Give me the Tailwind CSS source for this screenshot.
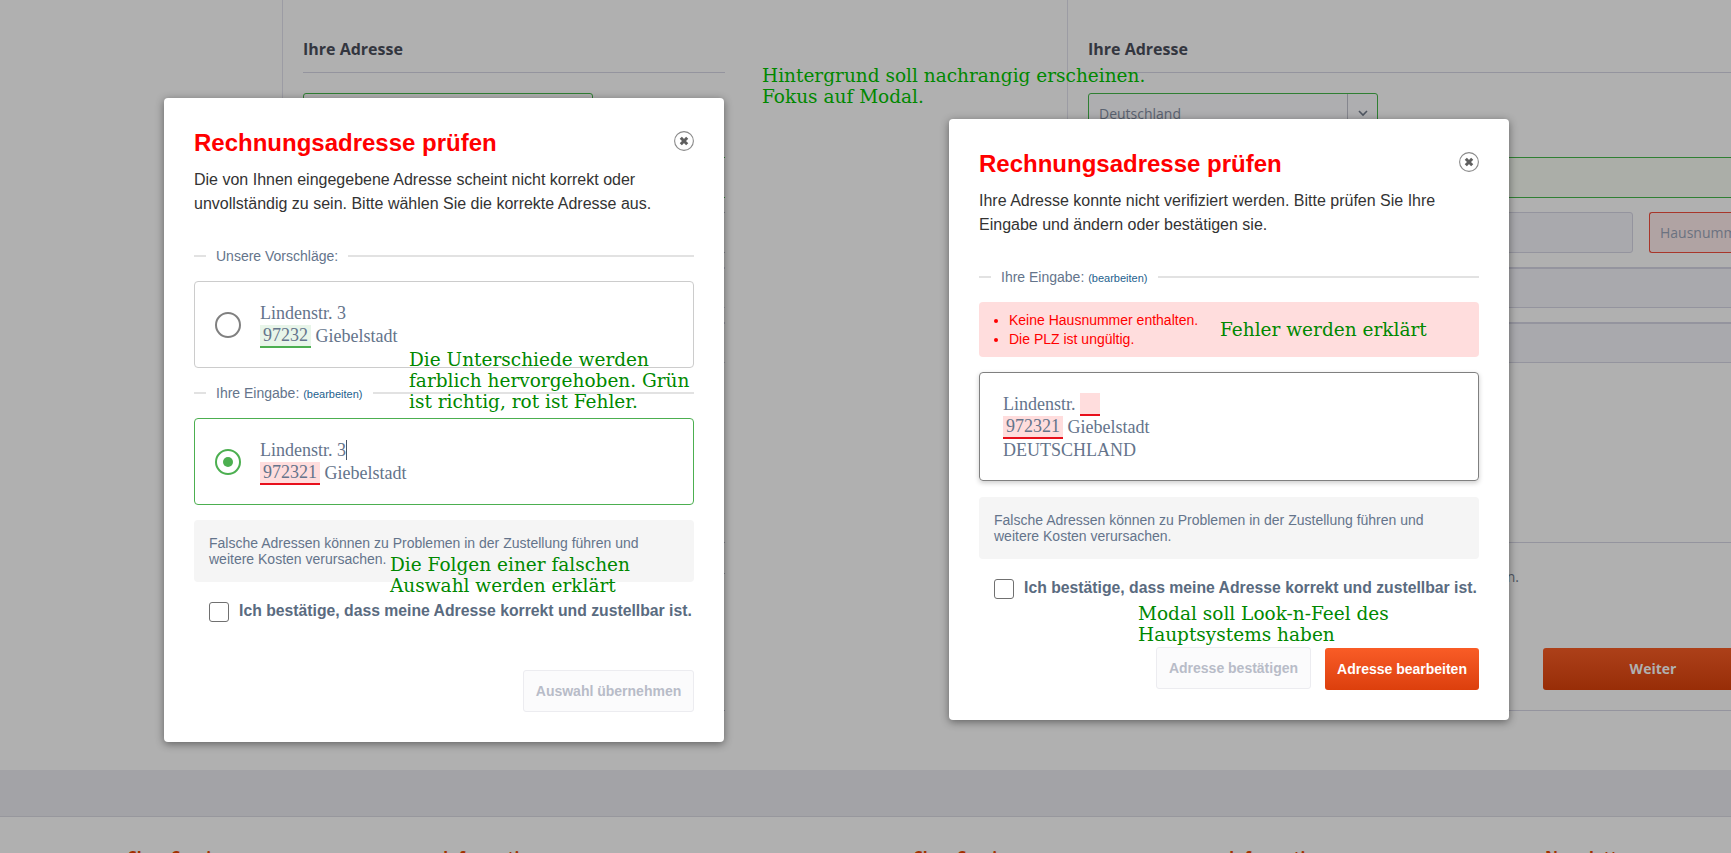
<!DOCTYPE html>
<html lang="de">
<head>
<meta charset="utf-8">
<title>Rechnungsadresse prüfen</title>
<script src="https://cdn.jsdelivr.net/npm/@tailwindcss/browser@4"></script>
</head>
<body class="m-0">
<div class="relative w-[1731px] h-[853px] overflow-hidden bg-[#b0b0b0] font-['Liberation_Sans',Arial,sans-serif]">

  <!-- dimmed page behind the modals -->
  <div class="flex h-[770px] overflow-hidden font-['Open_Sans',sans-serif]">
    <div class="flex w-[785px] shrink-0">
      <div class="w-[283px] h-[400px] shrink-0 border-r border-[#9c9ca4]"></div>
      <div class="ml-5 w-[422px] shrink-0">
        <div class="pt-[38px] pb-[12px] border-b border-[#94949e] text-[16px] leading-[22px] font-bold text-[#33363f]">Ihre Adresse</div>
        <div class="mt-5 w-[290px] h-10 border border-[#2f7f33] rounded-[3px]"></div>
        <div class="mt-6 h-[41px] border-y border-[#2f7f33]"></div>
        <div class="mt-[14px] h-[41px] border-y border-[#85868e]"></div>
        <div class="mt-[14px] h-[41px] border-t-2 border-b border-[#94949e]"></div>
        <div class="mt-[14px] h-[41px] border-t-2 border-b border-[#94949e]"></div>
        <div class="mt-[179px] border-t border-[#85868e]"></div>
        <div class="mt-[30px] border-t border-[#85868e]"></div>
        <div class="mt-[136px] border-t border-[#85868e]"></div>
      </div>
    </div>
    <div class="flex flex-1 min-w-0">
      <div class="w-[283px] h-[400px] shrink-0 border-r border-[#9c9ca4]"></div>
      <div class="ml-5 flex-1 min-w-0">
        <div class="pt-[38px] pb-[12px] border-b border-[#94949e] text-[16px] leading-[22px] font-bold text-[#33363f]">Ihre Adresse</div>
        <div class="mt-5 w-[290px] h-10 flex border border-[#2f7f33] rounded-[3px] bg-[#aeaeb0]">
          <div class="flex-1 pl-[10px] text-[14px] leading-[40px] text-[#5a6270]">Deutschland</div>
          <div class="w-[30px] flex items-center justify-center border-l border-[#85868e]">
            <svg width="10" height="7" viewBox="0 0 10 7" fill="none" stroke="#4f5661" stroke-width="1.6"><path d="M1 1l4 4 4-4"/></svg>
          </div>
        </div>
        <div class="mt-6 h-[41px] border-y border-[#2f7f33] bg-[#abaea8]"></div>
        <div class="mt-[14px] flex gap-[16px] h-[41px]">
          <div class="w-[545px] shrink-0 border border-[#94949e] rounded-[3px] bg-[#a9a9ad]"></div>
          <div class="flex-1 pl-[10px] border border-[#a8362a] rounded-l-[3px] border-r-0 bg-[#b0a3a3] text-[14px] leading-[39px] text-[#6b7280]">Hausnummer</div>
        </div>
        <div class="mt-[14px] h-[41px] border-t-2 border-b border-[#94949e] bg-[#a9a9ad]"></div>
        <div class="mt-[14px] h-[41px] border-t-2 border-b border-[#94949e] bg-[#a9a9ad]"></div>
        <div class="mt-[179px] border-t border-[#94949e]"></div>
        <p class="mt-[24px] w-[431px] text-right text-[14px] leading-[20px] text-[#4f5661]">Bitte prüfen Sie Ihre Angaben.</p>
        <div class="mt-[61px] ml-[455px] w-[220px] h-[42px] rounded-[3px] bg-gradient-to-b from-[#ad4019] to-[#982d07] text-center text-[14px] leading-[42px] font-bold text-[#b0b0b0]">Weiter</div>
        <div class="mt-[20px] border-t border-[#94949e]"></div>
      </div>
    </div>
  </div>

  <div class="h-[47px] bg-[#a3a3a7] border-b border-[#97979d]"></div>
  <div class="relative h-9 font-['Open_Sans',sans-serif] text-[16px] leading-[22px] font-bold text-[#a33000]">
    <span class="absolute left-[128px] top-[29px]">Shop Service</span>
    <span class="absolute left-[443px] top-[29px]">Informationen</span>
    <span class="absolute left-[914px] top-[29px]">Shop Service</span>
    <span class="absolute left-[1229px] top-[29px]">Informationen</span>
    <span class="absolute left-[1545px] top-[29px]">Newsletter</span>
  </div>

  <!-- left modal -->
  <section class="absolute left-[164px] top-[98px] w-[560px] px-[30px] pt-[30px] pb-[30px] bg-white rounded-[4px] shadow-[0_2px_8px_rgba(0,0,0,0.45)]">
    <div class="flex justify-between items-start">
      <h2 class="text-[24px] leading-[30px] font-bold text-[#ff0000]">Rechnungsadresse prüfen</h2>
      <svg class="mt-[3px]" width="20" height="20" viewBox="0 0 20 20" fill="none"><circle cx="10" cy="10" r="9.4" stroke="#8a8a8a" stroke-width="1.1"/><path d="M6.8 6.8l6.4 6.4M13.2 6.8l-6.4 6.4" stroke="#5f5f5f" stroke-width="3"/></svg>
    </div>
    <p class="mt-[10px] text-[16px] leading-[24px] text-[#333]">Die von Ihnen eingegebene Adresse scheint nicht korrekt oder<br>unvollständig zu sein. Bitte wählen Sie die korrekte Adresse aus.</p>

    <div class="mt-[30px] flex items-center h-5 text-[14px] text-[#64748b]">
      <span class="w-3 h-0.5 bg-[#e2e2e2]"></span>
      <span class="mx-[10px]">Unsere Vorschläge:</span>
      <span class="flex-1 h-0.5 bg-[#e2e2e2]"></span>
    </div>
    <div class="mt-[15px] h-[87px] flex items-center gap-[19px] pl-5 border border-[#cccccc] rounded-[4px]">
      <span class="w-[26px] h-[26px] rounded-full border-2 border-[#808080]"></span>
      <div class="font-['Liberation_Serif',serif] text-[18px] leading-[23px] text-[#64748b]">
        <div>Lindenstr. 3</div>
        <div><span class="inline-block align-top h-[23px] px-[3px] leading-[21px] bg-[#e8f5e9] border-b-2 border-[#4caf50]">97232</span> Giebelstadt</div>
      </div>
    </div>

    <div class="mt-[15px] flex items-center h-5 text-[14px] text-[#64748b]">
      <span class="w-3 h-0.5 bg-[#e2e2e2]"></span>
      <span class="mx-[10px]">Ihre Eingabe: <a class="text-[11px] text-[#1e5f8e]">(bearbeiten)</a></span>
      <span class="flex-1 h-0.5 bg-[#e2e2e2]"></span>
    </div>
    <div class="mt-[15px] h-[87px] flex items-center gap-[19px] pl-5 border border-[#4caf50] rounded-[4px]">
      <span class="w-[26px] h-[26px] rounded-full border-2 border-[#4caf50] flex items-center justify-center"><span class="w-[10px] h-[10px] rounded-full bg-[#4caf50]"></span></span>
      <div class="font-['Liberation_Serif',serif] text-[18px] leading-[23px] text-[#64748b]">
        <div>Lindenstr. 3<span class="inline-block align-top mt-px w-px h-5 bg-[#475569]"></span></div>
        <div><span class="inline-block align-top h-[23px] px-[3px] leading-[21px] bg-[#ffdddd] border-b-2 border-[#e8101c]">972321</span> Giebelstadt</div>
      </div>
    </div>

    <div class="mt-[15px] h-[62px] px-[15px] py-[15px] bg-[#f5f5f5] rounded-[4px] text-[14px] leading-4 text-[#64748b]">Falsche Adressen können zu Problemen in der Zustellung führen und<br>weitere Kosten verursachen.</div>

    <label class="mt-5 pl-[15px] flex items-start gap-[10px] h-5">
      <span class="w-5 h-5 shrink-0 rounded-[3px] border border-[#707070]"></span>
      <span class="-mt-px text-[15.75px] leading-5 font-bold text-[#5a6b80] whitespace-nowrap">Ich bestätige, dass meine Adresse korrekt und zustellbar ist.</span>
    </label>

    <div class="mt-12 flex justify-end">
      <button class="h-[42px] w-[171px] rounded-[3px] border border-[#ececf0] bg-[#fbfbfc] text-[14px] font-bold text-[#b8bcc8]">Auswahl übernehmen</button>
    </div>
  </section>

  <!-- right modal -->
  <section class="absolute left-[949px] top-[119px] w-[560px] px-[30px] pt-[30px] pb-[30px] bg-white rounded-[4px] shadow-[0_2px_8px_rgba(0,0,0,0.45)]">
    <div class="flex justify-between items-start">
      <h2 class="text-[24px] leading-[30px] font-bold text-[#ff0000]">Rechnungsadresse prüfen</h2>
      <svg class="mt-[3px]" width="20" height="20" viewBox="0 0 20 20" fill="none"><circle cx="10" cy="10" r="9.4" stroke="#8a8a8a" stroke-width="1.1"/><path d="M6.8 6.8l6.4 6.4M13.2 6.8l-6.4 6.4" stroke="#5f5f5f" stroke-width="3"/></svg>
    </div>
    <p class="mt-[10px] text-[16px] leading-[24px] text-[#333]">Ihre Adresse konnte nicht verifiziert werden. Bitte prüfen Sie Ihre<br>Eingabe und ändern oder bestätigen sie.</p>

    <div class="mt-[30px] flex items-center h-5 text-[14px] text-[#64748b]">
      <span class="w-3 h-0.5 bg-[#e2e2e2]"></span>
      <span class="mx-[10px]">Ihre Eingabe: <a class="text-[11px] text-[#1e5f8e]">(bearbeiten)</a></span>
      <span class="flex-1 h-0.5 bg-[#e2e2e2]"></span>
    </div>

    <ul class="mt-[15px] h-[55px] pl-[30px] py-[8.5px] list-disc bg-[#ffdddd] rounded-[4px] text-[14px] leading-[19px] text-[#ff0000]">
      <li>Keine Hausnummer enthalten.</li>
      <li>Die PLZ ist ungültig.</li>
    </ul>

    <div class="mt-[15px] h-[109px] flex items-center pl-[23px] pt-0.5 border border-[#808080] rounded-[4px] shadow-[0_2px_5px_rgba(0,0,0,0.2)] font-['Liberation_Serif',serif] text-[18px] leading-[23px] text-[#64748b]">
      <div>
        <div>Lindenstr. <span class="inline-block align-top w-5 h-[23px] bg-[#ffdddd] border-b-2 border-[#e8101c]"></span></div>
        <div><span class="inline-block align-top h-[23px] px-[3px] leading-[21px] bg-[#ffdddd] border-b-2 border-[#e8101c]">972321</span> Giebelstadt</div>
        <div>DEUTSCHLAND</div>
      </div>
    </div>

    <div class="mt-4 h-[62px] px-[15px] py-[15px] bg-[#f5f5f5] rounded-[4px] text-[14px] leading-4 text-[#64748b]">Falsche Adressen können zu Problemen in der Zustellung führen und<br>weitere Kosten verursachen.</div>

    <label class="mt-5 pl-[15px] flex items-start gap-[10px] h-5">
      <span class="w-5 h-5 shrink-0 rounded-[3px] border border-[#707070]"></span>
      <span class="-mt-px text-[15.75px] leading-5 font-bold text-[#5a6b80] whitespace-nowrap">Ich bestätige, dass meine Adresse korrekt und zustellbar ist.</span>
    </label>

    <div class="mt-12 flex justify-end items-start gap-[14px]">
      <button class="h-[42px] w-[155px] rounded-[3px] border border-[#ececf0] bg-[#fbfbfc] text-[14px] font-bold text-[#b8bcc8]">Adresse bestätigen</button>
      <button class="mt-px h-[42px] w-[154px] rounded-[3px] bg-gradient-to-b from-[#f95c26] to-[#dc3f0c] text-[14px] font-bold text-white">Adresse bearbeiten</button>
    </div>
  </section>

  <!-- review annotations placed freely over the picture -->
  <div class="font-['DejaVu_Serif',serif] text-[18.5px] leading-[21px] text-[#008800] whitespace-nowrap">
    <p class="absolute left-[762px] top-[65px]">Hintergrund soll nachrangig erscheinen.<br>Fokus auf Modal.</p>
    <p class="absolute left-[409px] top-[349px]">Die Unterschiede werden<br>farblich hervorgehoben. Grün<br>ist richtig, rot ist Fehler.</p>
    <p class="absolute left-[390px] top-[554px]">Die Folgen einer falschen<br>Auswahl werden erklärt</p>
    <p class="absolute left-[1220px] top-[319px]">Fehler werden erklärt</p>
    <p class="absolute left-[1138px] top-[603px]">Modal soll Look-n-Feel des<br>Hauptsystems haben</p>
  </div>
</div>
</body>
</html>
